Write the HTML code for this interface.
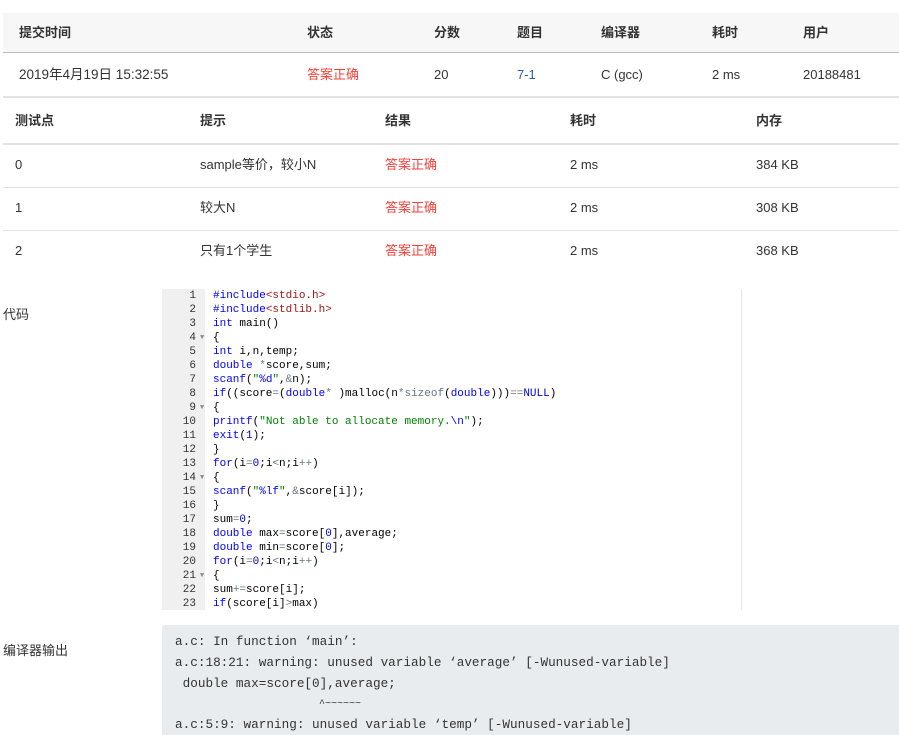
<!DOCTYPE html><html><head><meta charset="utf-8"><style>
*{margin:0;padding:0;box-sizing:border-box}
body{width:899px;height:731px;overflow:hidden;background:#fff;font-family:"Liberation Sans","Noto Sans CJK SC",sans-serif;font-size:13px;color:#333;position:relative}
.a{position:absolute;white-space:pre;line-height:16px;height:16px}
.b{font-weight:bold}
.r{color:#f0433a}
.code{position:absolute;left:162px;top:289px;width:580px;height:321px;border-right:1px solid #e8e8e8;overflow:hidden;font-family:"Liberation Mono",monospace;font-size:11px;line-height:14px}
.gut{position:absolute;left:0;top:0;width:43px;height:321px;background:#f0f0f0}
.ln{position:absolute;left:0;width:34px;text-align:right;color:#333}
.fd{position:absolute;left:38px;color:#888;font-size:7px}
.cl{position:absolute;left:51px;white-space:pre;color:#000}
.k{color:#0000ff}.s{color:#a31515}.g{color:#008000}.n{color:#0000cd}.o{color:#687687}.i{color:#0000ff}
.out{position:absolute;left:162px;top:625px;width:737px;height:110px;background:#e9ecef;border-radius:3px 0 0 0;font-family:"Liberation Mono",monospace;font-size:12.7px;color:#333;line-height:16px}
.out div{position:absolute;left:13px;white-space:pre}
</style></head><body>
<div class="a" style="left:3px;top:13px;width:896px;height:40px;background:#f7f7f7;border-bottom:1px solid #bdbdbd"></div>
<div class="a b" style="left:19px;top:25px">提交时间</div>
<div class="a b" style="left:307px;top:25px">状态</div>
<div class="a b" style="left:434px;top:25px">分数</div>
<div class="a b" style="left:517px;top:25px">题目</div>
<div class="a b" style="left:601px;top:25px">编译器</div>
<div class="a b" style="left:712px;top:25px">耗时</div>
<div class="a b" style="left:803px;top:25px">用户</div>
<div class="a" style="left:19px;top:67px;font-size:13.5px">2019年4月19日 15:32:55</div>
<div class="a r" style="left:307px;top:67px">答案正确</div>
<div class="a" style="left:434px;top:67px">20</div>
<div class="a" style="left:517px;top:67px;color:#2a5caa">7-1</div>
<div class="a" style="left:601px;top:67px">C (gcc)</div>
<div class="a" style="left:712px;top:67px">2 ms</div>
<div class="a" style="left:803px;top:67px">20188481</div>
<div class="a" style="left:3px;top:96px;width:896px;height:2px;background:#e3e3e3"></div>
<div class="a b" style="left:15px;top:113px">测试点</div>
<div class="a b" style="left:200px;top:113px">提示</div>
<div class="a b" style="left:385px;top:113px">结果</div>
<div class="a b" style="left:570px;top:113px">耗时</div>
<div class="a b" style="left:756px;top:113px">内存</div>
<div class="a" style="left:3px;top:143px;width:896px;height:2px;background:#e3e3e3"></div>
<div class="a" style="left:15px;top:157px">0</div><div class="a" style="left:200px;top:157px">sample等价，较小N</div><div class="a r" style="left:385px;top:157px">答案正确</div><div class="a" style="left:570px;top:157px">2 ms</div><div class="a" style="left:756px;top:157px">384 KB</div>
<div class="a" style="left:3px;top:187px;width:896px;height:1px;background:#e3e3e3"></div>
<div class="a" style="left:15px;top:200px">1</div><div class="a" style="left:200px;top:200px">较大N</div><div class="a r" style="left:385px;top:200px">答案正确</div><div class="a" style="left:570px;top:200px">2 ms</div><div class="a" style="left:756px;top:200px">308 KB</div>
<div class="a" style="left:3px;top:230px;width:896px;height:1px;background:#e3e3e3"></div>
<div class="a" style="left:15px;top:243px">2</div><div class="a" style="left:200px;top:243px">只有1个学生</div><div class="a r" style="left:385px;top:243px">答案正确</div><div class="a" style="left:570px;top:243px">2 ms</div><div class="a" style="left:756px;top:243px">368 KB</div>
<div class="a" style="left:3px;top:307px">代码</div>
<div class="a" style="left:3px;top:643px">编译器输出</div>
<div class="code"><div class="gut"></div>
<div class="ln" style="top:0">1</div><div class="cl" style="top:0"><span class="k">#include</span><span class="s">&lt;stdio.h&gt;</span></div>
<div class="ln" style="top:14px">2</div><div class="cl" style="top:14px"><span class="k">#include</span><span class="s">&lt;stdlib.h&gt;</span></div>
<div class="ln" style="top:28px">3</div><div class="cl" style="top:28px"><span class="k">int</span> main()</div>
<div class="ln" style="top:42px">4</div><div class="fd" style="top:42px">▼</div><div class="cl" style="top:42px">{</div>
<div class="ln" style="top:56px">5</div><div class="cl" style="top:56px"><span class="k">int</span> i,n,temp;</div>
<div class="ln" style="top:70px">6</div><div class="cl" style="top:70px"><span class="k">double</span> <span class="o">*</span>score,sum;</div>
<div class="ln" style="top:84px">7</div><div class="cl" style="top:84px"><span class="k">scanf</span>(<span class="g">"</span><span class="i">%d</span><span class="g">"</span>,<span class="o">&amp;</span>n);</div>
<div class="ln" style="top:98px">8</div><div class="cl" style="top:98px"><span class="k">if</span>((score<span class="o">=</span>(<span class="k">double</span><span class="o">*</span> )malloc(n<span class="o">*</span><span class="o">sizeof</span>(<span class="k">double</span>)))<span class="o">==</span><span class="n">NULL</span>)</div>
<div class="ln" style="top:112px">9</div><div class="fd" style="top:112px">▼</div><div class="cl" style="top:112px">{</div>
<div class="ln" style="top:126px">10</div><div class="cl" style="top:126px"><span class="k">printf</span>(<span class="g">"Not able to allocate memory.</span><span class="i">\n</span><span class="g">"</span>);</div>
<div class="ln" style="top:140px">11</div><div class="cl" style="top:140px"><span class="k">exit</span>(<span class="n">1</span>);</div>
<div class="ln" style="top:154px">12</div><div class="cl" style="top:154px">}</div>
<div class="ln" style="top:168px">13</div><div class="cl" style="top:168px"><span class="k">for</span>(i<span class="o">=</span><span class="n">0</span>;i<span class="o">&lt;</span>n;i<span class="o">++</span>)</div>
<div class="ln" style="top:182px">14</div><div class="fd" style="top:182px">▼</div><div class="cl" style="top:182px">{</div>
<div class="ln" style="top:196px">15</div><div class="cl" style="top:196px"><span class="k">scanf</span>(<span class="g">"</span><span class="i">%lf</span><span class="g">"</span>,<span class="o">&amp;</span>score[i]);</div>
<div class="ln" style="top:210px">16</div><div class="cl" style="top:210px">}</div>
<div class="ln" style="top:224px">17</div><div class="cl" style="top:224px">sum<span class="o">=</span><span class="n">0</span>;</div>
<div class="ln" style="top:238px">18</div><div class="cl" style="top:238px"><span class="k">double</span> max<span class="o">=</span>score[<span class="n">0</span>],average;</div>
<div class="ln" style="top:252px">19</div><div class="cl" style="top:252px"><span class="k">double</span> min<span class="o">=</span>score[<span class="n">0</span>];</div>
<div class="ln" style="top:266px">20</div><div class="cl" style="top:266px"><span class="k">for</span>(i<span class="o">=</span><span class="n">0</span>;i<span class="o">&lt;</span>n;i<span class="o">++</span>)</div>
<div class="ln" style="top:280px">21</div><div class="fd" style="top:280px">▼</div><div class="cl" style="top:280px">{</div>
<div class="ln" style="top:294px">22</div><div class="cl" style="top:294px">sum<span class="o">+=</span>score[i];</div>
<div class="ln" style="top:308px">23</div><div class="cl" style="top:308px"><span class="k">if</span>(score[i]<span class="o">&gt;</span>max)</div>
</div>
<div class="out">
<div style="top:9px">a.c: In function ‘main’:</div>
<div style="top:30px">a.c:18:21: warning: unused variable ‘average’ [-Wunused-variable]</div>
<div style="top:51px"> double max=score[0],average;</div>
<div style="top:72px;font-size:10px">                        ^~~~~~~</div>
<div style="top:92px">a.c:5:9: warning: unused variable ‘temp’ [-Wunused-variable]</div>
</div>
</body></html>
